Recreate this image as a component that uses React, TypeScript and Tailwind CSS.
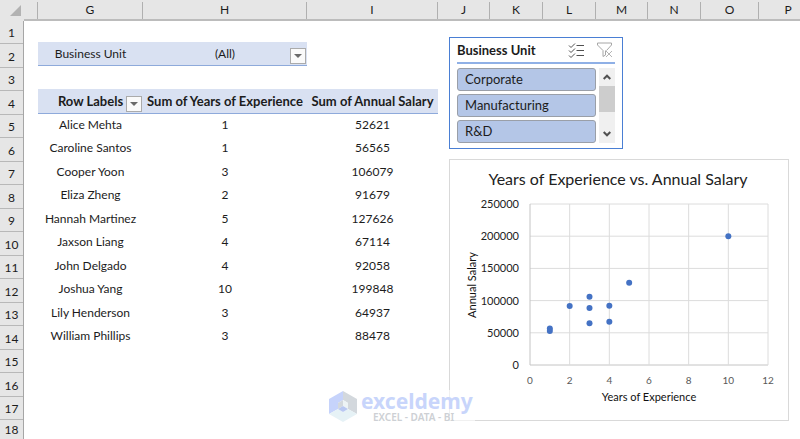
import React, { FC, useState } from "react";

const columns = [
  { name: "", width: "w-[14px]" },
  { name: "G", width: "w-[105px]" },
  { name: "H", width: "w-[164px]" },
  { name: "I", width: "w-[131px]" },
  { name: "J", width: "w-[52px]" },
  { name: "K", width: "w-[53px]" },
  { name: "L", width: "w-[53px]" },
  { name: "M", width: "w-[52px]" },
  { name: "N", width: "w-[53px]" },
  { name: "O", width: "w-[58px]" },
  { name: "P", width: "w-[58px]" },
];

const employees = [
  { name: "Alice Mehta", years: 1, salary: 52621 },
  { name: "Caroline Santos", years: 1, salary: 56565 },
  { name: "Cooper Yoon", years: 3, salary: 106079 },
  { name: "Eliza Zheng", years: 2, salary: 91679 },
  { name: "Hannah Martinez", years: 5, salary: 127626 },
  { name: "Jaxson Liang", years: 4, salary: 67114 },
  { name: "John Delgado", years: 4, salary: 92058 },
  { name: "Joshua Yang", years: 10, salary: 199848 },
  { name: "Lily Henderson", years: 3, salary: 64937 },
  { name: "William Phillips", years: 3, salary: 88478 },
];

const units = ["Corporate", "Manufacturing", "R&D"];

const DropButton: FC<{ label: string }> = ({ label }) => (
  <button
    aria-label={label}
    className="absolute right-px bottom-px flex h-4 w-4 items-center justify-center border border-[#ababab] bg-[#fafafa]"
  >
    <svg width="8" height="4" viewBox="0 0 8 4">
      <path d="M0 0h8L4 4z" fill="#6a6a6a" />
    </svg>
  </button>
);

const ColumnHeader: FC = () => (
  <div className="flex h-[21px] bg-[#e6e6e6]">
    <div className="flex w-6 shrink-0 items-center justify-end pr-[3px]">
      <svg width="11" height="11" viewBox="0 0 11 11">
        <path d="M11 0v11H0z" fill="#b2b2b2" />
      </svg>
    </div>
    <div className="flex flex-1 border-b-2 border-[#bcbcbc] pt-[2px]">
      {columns.map((col, i) => (
        <div
          key={i}
          className={`${col.width} shrink-0 border-r border-[#b0b0b0] text-center leading-4 last:border-r-0`}
        >
          {col.name}
        </div>
      ))}
    </div>
  </div>
);

const RowHeader: FC = () => (
  <div className="w-6 shrink-0 border-r border-[#a6a6a6] bg-[#e6e6e6]">
    {Array.from({ length: 18 }, (_, i) => (
      <div
        key={i}
        className="flex h-6 items-end justify-center border-b border-[#b8b8b8] pb-[2px] leading-4 first:h-[21px] last:h-[21px] odd:h-[23px]"
      >
        {i + 1}
      </div>
    ))}
  </div>
);

const PivotTable: FC = () => (
  <div className="mt-[21px] ml-[14px] w-[400px] shrink-0">
    <div className="flex h-6 w-[269px] items-center border-b border-[#8eaadb] bg-[#d9e1f2] text-center">
      <div className="w-[105px]">Business Unit</div>
      <div className="relative flex h-full flex-1 items-center justify-center">
        (All)
        <DropButton label="Filter Business Unit" />
      </div>
    </div>
    <table className="mt-[23px] w-full table-fixed border-collapse text-center leading-4">
      <colgroup>
        <col className="w-[105px]" />
        <col className="w-[164px]" />
        <col className="w-[131px]" />
      </colgroup>
      <thead>
        <tr className="h-6 border-b border-[#8eaadb] bg-[#d9e1f2] text-[13px] whitespace-nowrap">
          <th className="relative p-0">
            Row Labels
            <DropButton label="Filter row labels" />
          </th>
          <th className="p-0">Sum of Years of Experience</th>
          <th className="p-0">Sum of Annual Salary</th>
        </tr>
      </thead>
      <tbody>
        {employees.map((e) => (
          <tr key={e.name} className="h-6 odd:h-[23px]">
            <td className="p-0">{e.name}</td>
            <td className="p-0">{e.years}</td>
            <td className="p-0">{e.salary}</td>
          </tr>
        ))}
      </tbody>
    </table>
  </div>
);

const Slicer: FC = () => {
  const [selected, setSelected] = useState<string[]>(units);

  const toggle = (unit: string) => {
    setSelected(
      selected.includes(unit) ? selected.filter((u) => u !== unit) : [...selected, unit]
    );
  };

  return (
    <div className="h-[112px] w-[174px] border border-[#4a7fd4] bg-white px-[7px] text-[13px] leading-4">
      <div className="flex h-[26px] items-center border-b-2 border-[#8fb0e6]">
        <h2 className="flex-1 font-bold">Business Unit</h2>
        <button aria-label="Multi-select">
          <svg width="17" height="15" viewBox="0 0 17 15" fill="none" stroke="#505050">
            <path d="M1 2.5l2 2L7 .5M1 7.5l2 2 4-4M1 12.5l2 2 4-4M8.500 2.500H16M8.500 7.500H16M8.500 12.500H16" />
          </svg>
        </button>
        <button aria-label="Clear filter" className="mr-[2px] ml-3">
          <svg width="16" height="16" viewBox="0 0 16 16" fill="none" stroke="#a6a6a6">
            <path d="M.5 1h14v2L9.500 8.500M.5 1v2L6 8.500v6l2.500-1.500V8.500" />
            <path d="M9 9l6 6M15 9l-6 6" stroke="#b4b4b4" />
          </svg>
        </button>
      </div>
      <div className="mt-1 flex h-[75px] justify-between overflow-hidden">
        <div className="flex w-[139px] flex-col gap-[3px]">
          {units.map((unit) => (
            <button
              key={unit}
              onClick={() => toggle(unit)}
              className={`h-[23px] shrink-0 rounded-[3px] border border-[#9a9fa8] px-[7px] pb-px text-left ${
                selected.includes(unit) ? "bg-[#b4c6e7]" : "bg-white"
              }`}
            >
              {unit}
            </button>
          ))}
        </div>
        <div className="flex w-4 flex-col items-center bg-[#f0f0f0]">
          <button aria-label="Scroll up" className="flex h-[18px] items-center">
            <svg width="8" height="6" viewBox="0 0 8 6" fill="none" stroke="#505050" strokeWidth="2">
              <path d="M.7 5L4 1.700 7.300 5" />
            </svg>
          </button>
          <div className="h-[26px] w-full bg-[#cdcdcd]" />
          <button aria-label="Scroll down" className="mt-auto flex h-[18px] items-center">
            <svg width="8" height="6" viewBox="0 0 8 6" fill="none" stroke="#505050" strokeWidth="2">
              <path d="M.7 1L4 4.300 7.300 1" />
            </svg>
          </button>
        </div>
      </div>
    </div>
  );
};

// plot area inside the chart
const LEFT = 80;
const RIGHT = 318;
const TOP = 44;
const BOTTOM = 205;

const xPos = (years: number) => LEFT + (years / 12) * (RIGHT - LEFT);
const yPos = (salary: number) => BOTTOM - (salary / 250000) * (BOTTOM - TOP);

const ScatterChart: FC = () => (
  <div className="mt-[10px] w-[340px] border border-[#d9d9d9] bg-white">
    <svg viewBox="0 0 338 260" className="block w-full" role="img" aria-label="Scatter chart">
      <text x="168" y="25" fontSize="16" textAnchor="middle" fill="#222">
        Years of Experience vs. Annual Salary
      </text>
      {[0, 50000, 100000, 150000, 200000, 250000].map((v) => (
        <g key={v}>
          <line x1={LEFT} x2={RIGHT} y1={yPos(v)} y2={yPos(v)} stroke={v ? "#dcdcdc" : "#c4c4c4"} />
          <text x="69" y={yPos(v) + 4} fontSize="11" textAnchor="end" fill="#222">
            {v}
          </text>
        </g>
      ))}
      {[0, 2, 4, 6, 8, 10, 12].map((v) => (
        <g key={v}>
          <line x1={xPos(v)} x2={xPos(v)} y1={TOP} y2={BOTTOM} stroke={v ? "#dcdcdc" : "#c4c4c4"} />
          <text x={xPos(v)} y="224" fontSize="10" textAnchor="middle" fill="#595959">
            {v}
          </text>
        </g>
      ))}
      {employees.map((e) => (
        <circle key={e.name} cx={xPos(e.years)} cy={yPos(e.salary)} r="3" fill="#4472c4" />
      ))}
      <text x="199" y="241" fontSize="11" textAnchor="middle" fill="#111">
        Years of Experience
      </text>
      <text transform="translate(26 125) rotate(-90)" fontSize="11" textAnchor="middle" fill="#111">
        Annual Salary
      </text>
    </svg>
  </div>
);

const Watermark: FC = () => (
  <div className="absolute top-[390px] left-[327px] flex items-center gap-1 bg-white/60 px-[2px]">
    <svg width="28" height="32" viewBox="0 0 28 32">
      <path d="M14 1L0 9v15l9-5v-6l5-3z" fill="#c6d3fb" />
      <path d="M14 1l14 8v15l-9-5v-6l-5-3z" fill="#d3d8dd" />
      <path d="M0 24l9-5 5 3 5-3 9 5-14 8z" fill="#e6f2f6" />
      <path d="M14 10l-5 3v6l5-3z" fill="#d3d8dd" />
      <path d="M14 10l5 3v6l-5-3z" fill="#edf3f5" />
      <path d="M9 19l5-3 5 3-5 3z" fill="#b9c8f2" />
    </svg>
    <div className="font-['Noto_Sans',sans-serif]">
      <div className="text-[21px] leading-[22px] font-bold text-[#c8d5fb]">exceldemy</div>
      <div className="pl-3 text-[10px] leading-[10px] font-semibold text-[#cdd0d4]">
        EXCEL - DATA - BI
      </div>
    </div>
  </div>
);

const App: FC = () => {
  return (
    <div className="relative min-h-screen w-full overflow-hidden bg-white font-['Lato',sans-serif] text-xs text-[#1c1c1c]">
      <ColumnHeader />
      <div className="flex">
        <RowHeader />
        <PivotTable />
        <div className="ml-[11px] pt-4">
          <Slicer />
          <ScatterChart />
        </div>
      </div>
      <Watermark />
    </div>
  );
};

export default App;
